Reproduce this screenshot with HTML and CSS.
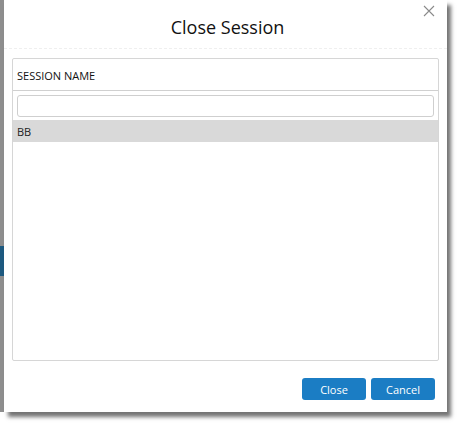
FILE: index.html
```html
<!DOCTYPE html>
<html>
<head>
<meta charset="utf-8">
<link rel="stylesheet" href="styles.css">
</head>
<body>
<div class="page">
  <div class="backdrop">
    <div class="bd-blue"></div>
  </div>
  <div class="modal">
    <div class="modal-header">
      <h1 class="title">Close Session</h1>
      <button class="x-btn" aria-label="Close">
        <svg width="12" height="12" viewBox="0 0 12 12"><path d="M1 1L11 11M11 1L1 11" stroke="#8a8a8a" stroke-width="1.1" fill="none"/></svg>
      </button>
    </div>
    <div class="modal-body">
      <div class="grid">
        <div class="grid-head">SESSION NAME</div>
        <div class="filter-row"><input class="filter" type="text"></div>
        <div class="grid-row selected">BB</div>
      </div>
    </div>
    <div class="modal-footer">
      <button class="btn">Close</button>
      <button class="btn">Cancel</button>
    </div>
  </div>
</div>
</body>
</html>
```
FILE: styles.css
```css
html, body {
  margin: 0;
  padding: 0;
  background: #ffffff;
  font-family: "Open Sans", "Noto Sans", sans-serif;
}
.page {
  display: flex;
  width: 462px;
  height: 427px;
  overflow: hidden;
}
.backdrop {
  width: 4px;
  height: 412px;
  background: #8e8e8e;
  display: flex;
  flex-direction: column;
  padding-top: 246px;
  box-sizing: border-box;
  flex: none;
}
.bd-blue {
  height: 30px;
  background: #1e5a80;
}
.modal {
  width: 443px;
  height: 412px;
  background: #ffffff;
  box-shadow: 4px 5px 4px rgba(0, 0, 0, 0.55);
  display: flex;
  flex-direction: column;
  position: relative;
  flex: none;
}
.modal-header {
  height: 49px;
  border-bottom: 1px dashed #efefef;
  display: flex;
  align-items: center;
  justify-content: center;
  box-sizing: border-box;
}
.title {
  margin: 0;
  font-size: 18px;
  font-weight: 500;
  color: #111;
  padding-top: 6px;
  padding-left: 4px;
}
.x-btn {
  position: absolute;
  top: 4px;
  right: 11px;
  width: 14px;
  height: 14px;
  padding: 0;
  border: 0;
  background: transparent;
  display: flex;
  align-items: center;
  justify-content: center;
}
.modal-body {
  padding: 9px 8px 0 8px;
}
.grid {
  height: 303px;
  border: 1px solid #d6d6d6;
  border-radius: 2px;
  box-sizing: border-box;
}
.grid-head {
  height: 32px;
  border-bottom: 1px solid #d0d0d0;
  font-size: 11px;
  color: #111;
  padding-left: 4px;
  display: flex;
  align-items: center;
  padding-top: 1px;
  box-sizing: border-box;
}
.filter-row {
  padding: 4px 4px 3px 4px;
}
.filter {
  display: block;
  width: 100%;
  height: 22px;
  box-sizing: border-box;
  border: 1px solid #cfcfcf;
  border-radius: 3px;
  margin: 0;
}
.grid-row {
  height: 22px;
  font-size: 11px;
  color: #222;
  padding-left: 4px;
  display: flex;
  align-items: center;
}
.grid-row.selected {
  background: #d9d9d9;
}
.modal-footer {
  display: flex;
  justify-content: flex-end;
  gap: 5px;
  padding: 17px 12px 0 0;
}
.btn {
  width: 64px;
  height: 22px;
  border: 0;
  border-radius: 3px;
  background: #1b7dc4;
  color: #ffffff;
  font-family: "Open Sans", "Noto Sans", sans-serif;
  font-size: 11px;
  padding: 0;
}
```
